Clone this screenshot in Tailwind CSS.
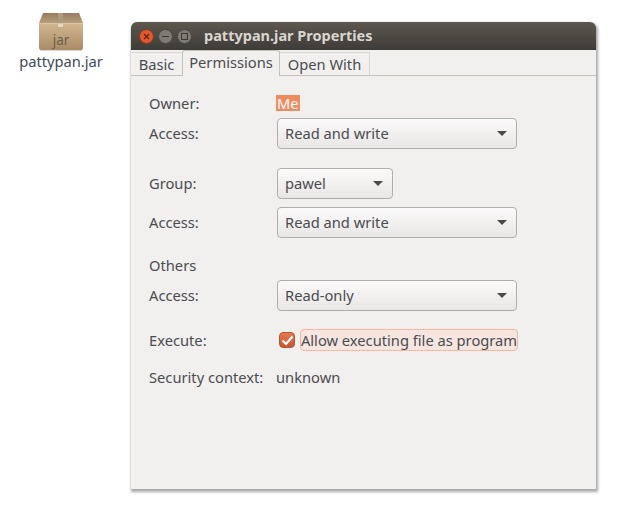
<!DOCTYPE html>
<html lang="en">
<head>
    <meta charset="UTF-8">
    <script src="https://cdn.jsdelivr.net/npm/@tailwindcss/browser@4"></script>
    <title>pattypan.jar Properties</title>
</head>
<body class="bg-white font-['Noto_Sans',sans-serif] text-[14.7px] text-[#4a4c50]">
    <div class="relative w-[622px] h-[511px] overflow-hidden bg-white">

        <!-- Desktop icon -->
        <div class="absolute left-[10px] top-[13px] w-[102px] flex flex-col items-center">
            <svg width="44" height="39" viewBox="0 0 44 39">
                <defs>
                    <linearGradient id="lid" x1="0" y1="0" x2="0" y2="1">
                        <stop offset="0" stop-color="#957c5e"/>
                        <stop offset="1" stop-color="#b79e7c"/>
                    </linearGradient>
                    <linearGradient id="box" x1="0" y1="0" x2="0" y2="1">
                        <stop offset="0" stop-color="#d2b790"/>
                        <stop offset="1" stop-color="#a98c66"/>
                    </linearGradient>
                </defs>
                <path d="M4 0H40L44 10H0Z" fill="url(#lid)"/>
                <path d="M0 10H44V35Q44 37 42 37H2Q0 37 0 35Z" fill="url(#box)"/>
                <rect x="19" y="0" width="5" height="10" fill="#ad9a80"/>
                <rect x="19" y="10" width="5" height="4" fill="#e6d9c4"/>
                <rect x="0" y="10" width="44" height="1" fill="#dcc6a5"/>
                <rect x="1" y="37" width="42" height="1" fill="#dad6d0"/>
                <text x="22" y="32" text-anchor="middle" font-family="Noto Sans" font-size="13.5" fill="#6d5d4a">jar</text>
            </svg>
            <span class="-mt-[1px] text-[14.7px] leading-[20px] text-[#3f4a57]">pattypan.jar</span>
        </div>

        <!-- Properties window -->
        <div class="absolute left-[131px] top-[22px] w-[465px] h-[467px] bg-[#f1f0ee] rounded-t-[6px] shadow-[1px_2px_3px_1px_rgba(0,0,0,0.35)] flex flex-col">

            <!-- Title bar -->
            <div class="h-[28px] shrink-0 rounded-t-[6px] bg-gradient-to-b from-[#5c584f] to-[#3e3c37] flex items-center pl-[8px]">
                <div class="flex items-center gap-[4px]">
                    <span class="w-[15px] h-[15px] rounded-full bg-[#e2572b] border border-[#7a3a20] flex items-center justify-center">
                        <svg width="7" height="7" viewBox="0 0 7 7"><path d="M1 1L6 6M6 1L1 6" stroke="#5a2410" stroke-width="1.2"/></svg>
                    </span>
                    <span class="w-[15px] h-[15px] rounded-full bg-[#7d7b74] border border-[#47453f] flex items-center justify-center">
                        <span class="w-[7px] h-[1px] bg-[#3a3833]"></span>
                    </span>
                    <span class="w-[15px] h-[15px] rounded-full bg-[#7d7b74] border border-[#47453f] flex items-center justify-center">
                        <span class="w-[7px] h-[7px] border border-[#3a3833]"></span>
                    </span>
                </div>
                <span class="ml-[12px] font-bold text-[14.5px] text-[#d9d6cf]">pattypan.jar Properties</span>
            </div>

            <!-- Tabs -->
            <div class="h-[26px] shrink-0 border-b border-[#c4c1bb] flex items-end">
                <div class="w-[52px] h-[23px] border-r border-t border-[#d8d6d2] flex items-center justify-center leading-none">Basic</div>
                <div class="w-[98px] h-[26px] -mb-px -ml-px bg-[#f1f0ee] border-x border-t border-[#c4c1bb] rounded-t-[3px] flex items-center justify-center leading-none pb-[3px]">Permissions</div>
                <div class="w-[90px] h-[23px] border-r border-t border-[#d8d6d2] flex items-center justify-center leading-none">Open With</div>
            </div>

            <!-- Permissions form -->
            <div class="pl-[18px] flex flex-col">
                <div class="mt-[16px] h-[22px] flex items-center">
                    <span class="w-[127px]">Owner:</span>
                    <span class="bg-[#f08a5f] text-white px-px leading-[16px]">Me</span>
                </div>
                <div class="mt-[4px] h-[31px] flex items-center">
                    <span class="w-[128px]">Access:</span>
                    <div class="w-[240px] h-[31px] rounded-[4px] border border-[#b0aeaa] bg-gradient-to-b from-[#fbfafa] to-[#e9e7e5] pl-[7px] pr-[9px] flex items-center justify-between">
                        <span>Read and write</span>
                        <span class="w-0 h-0 border-x-[5px] border-t-[5px] border-x-transparent border-t-[#4a4a4a]"></span>
                    </div>
                </div>
                <div class="mt-[19px] h-[31px] flex items-center">
                    <span class="w-[128px]">Group:</span>
                    <div class="w-[116px] h-[31px] rounded-[4px] border border-[#b0aeaa] bg-gradient-to-b from-[#fbfafa] to-[#e9e7e5] pl-[7px] pr-[9px] flex items-center justify-between">
                        <span>pawel</span>
                        <span class="w-0 h-0 border-x-[5px] border-t-[5px] border-x-transparent border-t-[#4a4a4a]"></span>
                    </div>
                </div>
                <div class="mt-[8px] h-[31px] flex items-center">
                    <span class="w-[128px]">Access:</span>
                    <div class="w-[240px] h-[31px] rounded-[4px] border border-[#b0aeaa] bg-gradient-to-b from-[#fbfafa] to-[#e9e7e5] pl-[7px] pr-[9px] flex items-center justify-between">
                        <span>Read and write</span>
                        <span class="w-0 h-0 border-x-[5px] border-t-[5px] border-x-transparent border-t-[#4a4a4a]"></span>
                    </div>
                </div>
                <div class="mt-[16px] h-[22px] flex items-center">Others</div>
                <div class="mt-[4px] h-[31px] flex items-center">
                    <span class="w-[128px]">Access:</span>
                    <div class="w-[240px] h-[31px] rounded-[4px] border border-[#b0aeaa] bg-gradient-to-b from-[#fbfafa] to-[#e9e7e5] pl-[7px] pr-[9px] flex items-center justify-between">
                        <span>Read-only</span>
                        <span class="w-0 h-0 border-x-[5px] border-t-[5px] border-x-transparent border-t-[#4a4a4a]"></span>
                    </div>
                </div>
                <div class="mt-[18px] h-[22px] flex items-center">
                    <span class="w-[130px]">Execute:</span>
                    <span class="w-[16px] h-[16px] rounded-[4px] bg-gradient-to-b from-[#e9794c] to-[#c8552c] border border-[#a85a38] flex items-center justify-center">
                        <svg width="13" height="11" viewBox="0 0 13 11"><path d="M1.5 5.5L5 9L11.5 1.5" fill="none" stroke="#fff" stroke-width="2.2"/></svg>
                    </span>
                    <span class="ml-[5px] w-[218px] h-[22px] rounded-[4px] border border-[#f4b9a0] bg-[#f6e6df] flex items-center justify-center whitespace-nowrap">Allow executing file as program</span>
                </div>
                <div class="mt-[15px] h-[22px] flex items-center">
                    <span class="w-[127px] whitespace-nowrap">Security context:</span>
                    <span>unknown</span>
                </div>
            </div>
        </div>
    </div>
</body>
</html>
